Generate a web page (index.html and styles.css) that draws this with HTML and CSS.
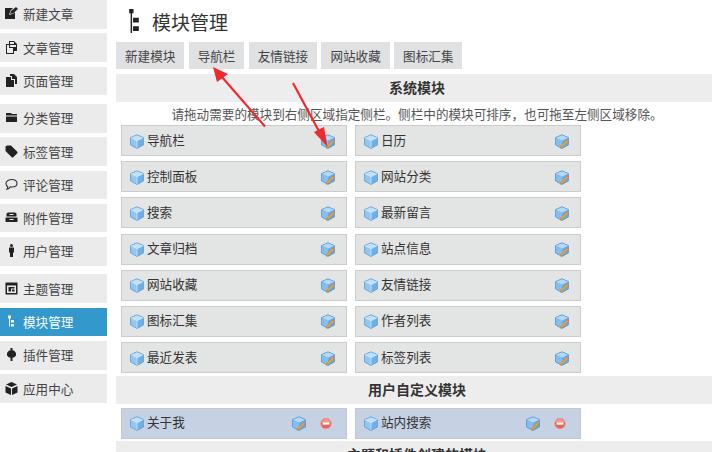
FILE: index.html
```html
<!DOCTYPE html>
<html>
	<head>
		<meta charset="utf-8" />
		<title>模块管理</title>
		<link rel="stylesheet" href="styles.css">
	</head>
	<body>
		<svg class="defs" width="0" height="0">
			<symbol id="cube" viewBox="0 0 14 15">
				<path d="M7 .8 L13.400 3.600 V11 L7 14.400 L.6 11 V3.600 Z" fill="#6fb0e6" stroke="#5c9fd8" stroke-width=".9" stroke-linejoin="round"/>
				<path d="M7 1.200 L13 3.800 L7 6.800 L1 3.800 Z" fill="#c2e0f8"/>
				<path d="M7 6.800 V14 L1 10.800 V3.800 Z" fill="#93c6f0"/>
				<path d="M7 6.800 V14 M1 3.800 L7 6.800 L13 3.800" stroke="#d8ebfb" stroke-width=".7" fill="none"/>
			</symbol>
			<symbol id="cube-edit" viewBox="0 0 14 15">
				<path d="M7 .8 L13.400 3.600 V11 L7 14.400 L.6 11 V3.600 Z" fill="#6aaae2" stroke="#5596d0" stroke-width=".9" stroke-linejoin="round"/>
				<path d="M7 1.200 L13 3.800 L7 6.800 L1 3.800 Z" fill="#b5d8f5"/>
				<path d="M7 6.800 V14 L1 10.800 V3.800 Z" fill="#86bdec"/>
				<path d="M5.200 14.300 L5.900 12 L11.900 6.100 L13.200 7.400 L7.300 13.400 Z" fill="#f2a52e" stroke="#a8691c" stroke-width=".3"/>
				<path d="M11.900 6.100 L12.800 5.200 L14 6.500 L13.200 7.400 Z" fill="#e46cb8"/>
			</symbol>
			<symbol id="minus" viewBox="0 0 13 13">
				<circle cx="6.500" cy="6.500" r="6" fill="#e8645a" stroke="#e2b6ae" stroke-width="1"/>
				<path d="M1.400 5.400 A5.300 5.300 0 0 1 11.600 5.400 Z" fill="#f09a90"/>
				<rect x="2.800" y="5.300" width="7.400" height="2.400" fill="#fff"/>
			</symbol>
		</svg>

		<div class="page">
			<aside class="sidebar">
				<div class="nav-group">
					<a class="nav-item"><svg class="nav-icon" viewBox="0 0 13 13"><path d="M0 1h8L5.500 3.500 4 8l4.500-1.500L10 5v7H0Z M5 7l1-3 5-4 2 2-4.500 4Z"/></svg>新建文章</a>
					<a class="nav-item"><svg class="nav-icon" viewBox="0 0 13 13"><path d="M4 0h5l3 3v7H9v3H1V3h3Z M5 1v2h4V1Z M2 4v8h6V7H4V4Z M5 4v2h6V4Z" fill-rule="evenodd"/></svg>文章管理</a>
					<a class="nav-item"><svg class="nav-icon" viewBox="0 0 13 13"><path d="M1 3h5v3h3v7H1Z M5 0h4l3 3v7H10V5H7V2H5Z"/></svg>页面管理</a>
				</div>
				<div class="nav-group">
					<a class="nav-item"><svg class="nav-icon" viewBox="0 0 13 13"><path d="M1 2h5l1 1h5v1.500H1Z M1 5.500h11V11H1Z"/></svg>分类管理</a>
					<a class="nav-item"><svg class="nav-icon" viewBox="0 0 13 13"><path d="M.5 1.500 2 .5h4l6.500 6.500v1L8 12.500H7L.5 6Z"/></svg>标签管理</a>
					<a class="nav-item"><svg class="nav-icon" viewBox="0 0 13 13"><path d="M7 1.500c2.800 0 5 1.400 5 3.700S9.800 9 7 9c-.6 0-1.200-.1-1.700-.2C4.500 10.400 3.200 11.200 1.800 11.300c.7-.8 1-1.600 1-2.500C1.700 8 1 6.700 1 5.200 1 2.900 4.200 1.500 7 1.500Z" fill="none" stroke="#333" stroke-width="1.100"/></svg>评论管理</a>
					<a class="nav-item"><svg class="nav-icon" viewBox="0 0 13 13"><path d="M1.500 2.500 3 1.500h7l1.500 1V5.500h-10Z M.5 6.500h12V11h-12Z M4.500 3h4v1h-4Z M4.500 8h4v1h-4Z" fill-rule="evenodd"/></svg>附件管理</a>
					<a class="nav-item"><svg class="nav-icon" viewBox="0 0 13 13"><circle cx="6.500" cy="1.500" r="1.500"/><path d="M4 3.500h5v5H8v4.500H5V8.500H4Z"/></svg>用户管理</a>
				</div>
				<div class="nav-group">
					<a class="nav-item"><svg class="nav-icon" viewBox="0 0 13 13"><path d="M.5.5h12v12H.5Z M2 3.500V11h9V3.500Z M3.500 5h6v1.500H6v3H3.500Z M7 7.500h2.500v2H7Z" fill-rule="evenodd"/></svg>主题管理</a>
					<a class="nav-item active"><svg class="nav-icon" viewBox="0 0 13 13"><path d="M3 .5h3v3H5v8H4v-8H3Z M6 5h3v2.500H6Z M6 9h3v2.500H6Z"/></svg>模块管理</a>
					<a class="nav-item"><svg class="nav-icon" viewBox="0 0 13 13"><path d="M5.500 0h2v2.500H9L11 5v2.500l-2 2H7.500V13h-2V9.500H4l-2-2V5l2-2.500h1.500Z"/></svg>插件管理</a>
					<a class="nav-item"><svg class="nav-icon" viewBox="0 0 13 13"><path d="M6.500 0 12 2.500 6.500 5 1 2.500Z M.5 4 6 6.500V13L.5 10.500Z M12.500 4v6.500L7 13V6.500Z"/></svg>应用中心</a>
				</div>
			</aside>

			<main class="content">
				<h1 class="title">
					<svg class="title-icon" viewBox="0 0 10 26"><path d="M0 0h4.500v4.500H3V25H1.500V4.500H0Z M4 9h6v5H4Z M4 18h6v5H4Z"/></svg>
					模块管理
				</h1>
				<div class="tabs">
					<a class="tab">新建模块</a>
					<a class="tab">导航栏</a>
					<a class="tab">友情链接</a>
					<a class="tab">网站收藏</a>
					<a class="tab">图标汇集</a>
				</div>

				<div class="section-head">系统模块</div>
				<p class="notice">请拖动需要的模块到右侧区域指定侧栏。侧栏中的模块可排序，也可拖至左侧区域移除。</p>
				<div class="modules">
					<div class="module"><svg class="cube"><use href="#cube"/></svg><span class="module-name">导航栏</span><svg class="cube"><use href="#cube-edit"/></svg></div>
					<div class="module"><svg class="cube"><use href="#cube"/></svg><span class="module-name">日历</span><svg class="cube"><use href="#cube-edit"/></svg></div>
					<div class="module"><svg class="cube"><use href="#cube"/></svg><span class="module-name">控制面板</span><svg class="cube"><use href="#cube-edit"/></svg></div>
					<div class="module"><svg class="cube"><use href="#cube"/></svg><span class="module-name">网站分类</span><svg class="cube"><use href="#cube-edit"/></svg></div>
					<div class="module"><svg class="cube"><use href="#cube"/></svg><span class="module-name">搜索</span><svg class="cube"><use href="#cube-edit"/></svg></div>
					<div class="module"><svg class="cube"><use href="#cube"/></svg><span class="module-name">最新留言</span><svg class="cube"><use href="#cube-edit"/></svg></div>
					<div class="module"><svg class="cube"><use href="#cube"/></svg><span class="module-name">文章归档</span><svg class="cube"><use href="#cube-edit"/></svg></div>
					<div class="module"><svg class="cube"><use href="#cube"/></svg><span class="module-name">站点信息</span><svg class="cube"><use href="#cube-edit"/></svg></div>
					<div class="module"><svg class="cube"><use href="#cube"/></svg><span class="module-name">网站收藏</span><svg class="cube"><use href="#cube-edit"/></svg></div>
					<div class="module"><svg class="cube"><use href="#cube"/></svg><span class="module-name">友情链接</span><svg class="cube"><use href="#cube-edit"/></svg></div>
					<div class="module"><svg class="cube"><use href="#cube"/></svg><span class="module-name">图标汇集</span><svg class="cube"><use href="#cube-edit"/></svg></div>
					<div class="module"><svg class="cube"><use href="#cube"/></svg><span class="module-name">作者列表</span><svg class="cube"><use href="#cube-edit"/></svg></div>
					<div class="module"><svg class="cube"><use href="#cube"/></svg><span class="module-name">最近发表</span><svg class="cube"><use href="#cube-edit"/></svg></div>
					<div class="module"><svg class="cube"><use href="#cube"/></svg><span class="module-name">标签列表</span><svg class="cube"><use href="#cube-edit"/></svg></div>
				</div>

				<div class="section-head second">用户自定义模块</div>
				<div class="modules custom">
					<div class="module user"><svg class="cube"><use href="#cube"/></svg><span class="module-name">关于我</span><svg class="cube"><use href="#cube-edit"/></svg><svg class="minus"><use href="#minus"/></svg></div>
					<div class="module user"><svg class="cube"><use href="#cube"/></svg><span class="module-name">站内搜索</span><svg class="cube"><use href="#cube-edit"/></svg><svg class="minus"><use href="#minus"/></svg></div>
				</div>

				<div class="section-head">主题和插件创建的模块</div>
			</main>
		</div>

		<!-- annotation arrows drawn over the screenshot -->
		<svg class="arrows" width="712" height="452" viewBox="0 0 712 452">
			<path d="M265 126.500 L222 77" stroke="#ee2a2e" stroke-width="2.200" fill="none"/>
			<path d="M213 67 L228 74 L217 82 Z" fill="#ee2a2e"/>
			<path d="M293 83 L321 135" stroke="#ee2a2e" stroke-width="2.200" fill="none"/>
			<path d="M327.500 147 L314 132 L324 127 Z" fill="#ee2a2e"/>
		</svg>
	</body>
</html>
```

FILE: styles.css
```css
html,
body {
	margin: 0;
	height: 452px;
	overflow: hidden;
}

body {
	position: relative;
	font-family: "Noto Sans CJK SC", "Liberation Sans", sans-serif;
	font-size: 12.600px;
	color: #444;
	background-color: #fff;
}

.defs {
	position: absolute;
}

.page {
	display: flex;
}

.sidebar {
	flex: none;
	width: 107px;
	display: flex;
	flex-direction: column;
	gap: 8.800px;
}

.nav-group {
	display: flex;
	flex-direction: column;
	gap: 4.700px;
}

.nav-item {
	display: flex;
	align-items: center;
	gap: 5px;
	height: 28.600px;
	box-sizing: border-box;
	padding: 0 0 1px 5px;
	background-color: #ebebeb;
	color: #444;
}

.nav-icon {
	width: 13px;
	height: 13px;
	fill: #222;
}

.nav-item.active {
	background-color: #3399cc;
	color: #fff;
}

.nav-item.active .nav-icon {
	fill: #fff;
}

.content {
	flex: none;
	width: 596px;
	margin-left: 9px;
}

.title {
	display: flex;
	align-items: center;
	gap: 13px;
	height: 42px;
	margin: 0;
	padding-left: 13px;
	box-sizing: border-box;
	font-size: 19px;
	font-weight: normal;
	color: #333;
}

.title-icon {
	width: 10px;
	height: 25px;
	fill: #222;
}

.tabs {
	display: flex;
	gap: 4.300px;
	margin-bottom: 5px;
}

.tab {
	display: flex;
	align-items: center;
	height: 27px;
	padding: 0 9px;
	background-color: #e0e1e3;
	color: #444;
}

.section-head {
	height: 28px;
	padding-left: 6px;
	background-color: #ededed;
	font-size: 14px;
	font-weight: bold;
	line-height: 27px;
	text-align: center;
	color: #333;
}

.section-head.second {
	height: 27.600px;
}

.notice {
	height: 23px;
	margin: 0;
	padding-left: 6px;
	line-height: 23px;
	text-align: center;
	color: #555;
}

.modules {
	display: grid;
	grid-template-columns: 226px 226px;
	column-gap: 8px;
	row-gap: 5.200px;
	padding: 0 0 2.800px 5px;
}

.modules.custom {
	padding: 4.400px 0 2px 5px;
}

.module {
	display: flex;
	align-items: center;
	gap: 3px;
	height: 31px;
	box-sizing: border-box;
	padding: 0 11px 0 8px;
	border: 1px solid #cbcccb;
	background-color: #e3e5e4;
	color: #333;
}

.module.user {
	background-color: #c6d2e4;
	padding-right: 14px;
	border-color: #c4c8cc;
}

.module-name {
	flex: 1;
	margin-top: -3px;
}

.cube {
	width: 14px;
	height: 15px;
	margin-top: 1px;
}

.minus {
	width: 12px;
	height: 13px;
	margin-left: 11px;
	margin-top: 1px;
}

.arrows {
	position: absolute;
	left: 0;
	top: 0;
	pointer-events: none;
}
```
